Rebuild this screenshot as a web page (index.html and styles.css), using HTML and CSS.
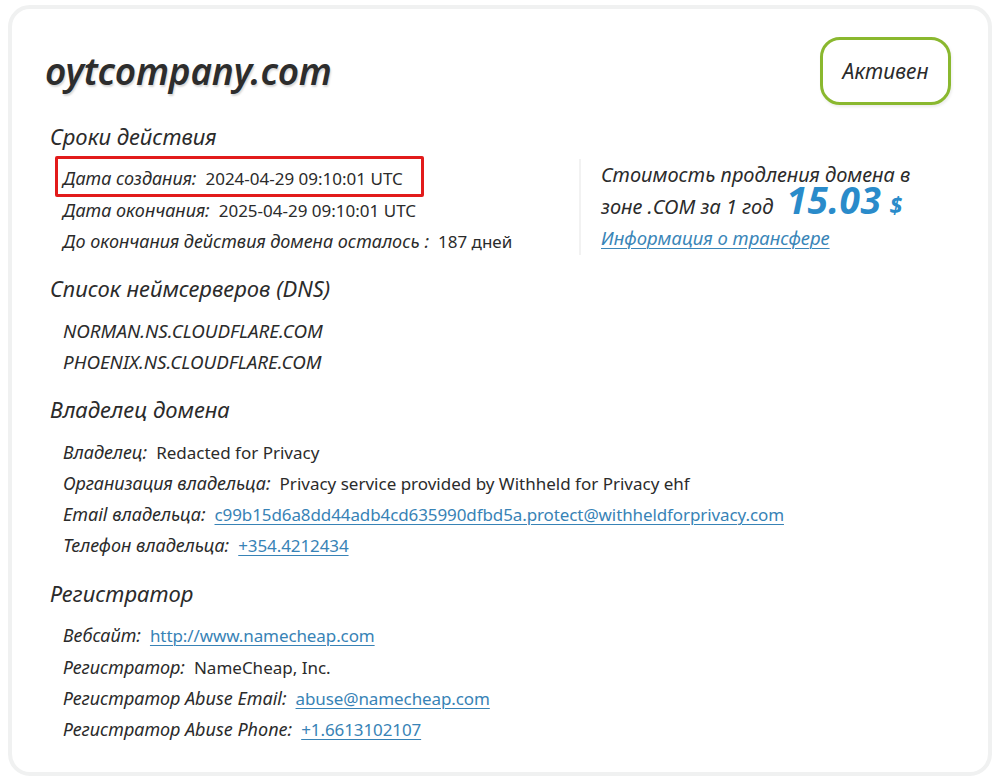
FILE: index.html
```html
<!DOCTYPE html>
<html lang="ru">
<head>
<meta charset="utf-8">
<title>oytcompany.com</title>
<link rel="stylesheet" href="styles.css">
</head>
<body>
<div class="card">
  <div class="top">
    <h1 class="domain">oytcompany.com</h1>
    <div class="badge">Активен</div>
  </div>

  <div class="split">
    <div class="left">
      <h2 class="sec">Сроки действия</h2>
      <div class="rows">
        <div class="row hl"><span class="lbl">Дата создания:</span><span class="val">2024-04-29 09:10:01 UTC</span></div>
        <div class="row"><span class="lbl">Дата окончания:</span><span class="val">2025-04-29 09:10:01 UTC</span></div>
        <div class="row"><span class="lbl">До окончания действия домена осталось :</span><span class="val">187 дней</span></div>
      </div>
    </div>
    <div class="right">
      <div class="price">
        <div class="pline">Стоимость продления домена в</div>
        <div class="pline pline2"><span>зоне .COM за 1 год</span><span class="num">15.03</span><span class="cur">$</span></div>
      </div>
      <a class="transfer" href="#">Информация о трансфере</a>
    </div>
  </div>

  <h2 class="sec">Список неймсерверов (DNS)</h2>
  <div class="rows">
    <div class="row"><span class="lbl ns">NORMAN.NS.CLOUDFLARE.COM</span></div>
    <div class="row"><span class="lbl ns">PHOENIX.NS.CLOUDFLARE.COM</span></div>
  </div>

  <h2 class="sec">Владелец домена</h2>
  <div class="rows">
    <div class="row"><span class="lbl">Владелец:</span><span class="val">Redacted for Privacy</span></div>
    <div class="row"><span class="lbl">Организация владельца:</span><span class="val">Privacy service provided by Withheld for Privacy ehf</span></div>
    <div class="row"><span class="lbl">Email владельца:</span><a class="val link" href="#">c99b15d6a8dd44adb4cd635990dfbd5a.protect@withheldforprivacy.com</a></div>
    <div class="row"><span class="lbl">Телефон владельца:</span><a class="val link" href="#">+354.4212434</a></div>
  </div>

  <h2 class="sec">Регистратор</h2>
  <div class="rows">
    <div class="row"><span class="lbl">Вебсайт:</span><a class="val link" href="#">http://www.namecheap.com</a></div>
    <div class="row"><span class="lbl">Регистратор:</span><span class="val">NameCheap, Inc.</span></div>
    <div class="row"><span class="lbl">Регистратор Abuse Email:</span><a class="val link" href="#">abuse@namecheap.com</a></div>
    <div class="row"><span class="lbl">Регистратор Abuse Phone:</span><a class="val link" href="#">+1.6613102107</a></div>
  </div>
</div>
</body>
</html>
```

FILE: styles.css
```css
html, body {
  margin: 0;
  padding: 0;
  background: #ffffff;
}
body {
  padding: 5px 9px 3px 8px;
  font-family: "Noto Sans", "Open Sans", sans-serif;
  color: #2b2b2b;
}
.card {
  box-sizing: border-box;
  height: 771px;
  border: 4px solid #f0f1f1;
  border-radius: 22px;
  background: #fff;
  padding: 22px 36px 0 34px;
}
.top {
  display: flex;
  justify-content: space-between;
  align-items: flex-start;
}
.domain {
  margin: 16px 0 0 -1px;
  font-size: 37px;
  font-style: italic;
  font-weight: 600;
  letter-spacing: -0.2px;
  line-height: 48px;
  color: #2d2d2d;
  text-shadow: 1px 2px 2px rgba(0,0,0,0.16);
}
.badge {
  margin-top: 6px;
  margin-right: 1px;
  width: 131px;
  height: 68px;
  box-sizing: border-box;
  border: 3px solid #8ab82f;
  border-radius: 20px;
  display: flex;
  align-items: center;
  justify-content: center;
  font-style: italic;
  font-size: 21px;
  color: #2b2b2b;
  box-shadow: 1px 2px 3px rgba(0,0,0,0.08);
}
.sec {
  margin: 0 0 0 4px;
  font-size: 22px;
  font-style: italic;
  font-weight: 400;
  line-height: 30px;
  color: #2b2b2b;
}
.split {
  display: flex;
  margin-top: 16px;
}
.left {
  width: 533px;
}
.right {
  margin-top: 38px;
  border-left: 2px solid #f2f2f2;
  padding: 0 0 6px 20px;
  align-self: flex-start;
  display: flex;
  flex-direction: column;
  align-items: flex-start;
}
.rows {
  display: flex;
  flex-direction: column;
  padding: 12.5px 0 16px 17px;
}
.row {
  display: flex;
  align-items: baseline;
  height: 31.3px;
  line-height: 31px;
  white-space: nowrap;
}
.split .row {
  height: 31px;
}
.split .rows {
  padding-bottom: 16.5px;
}
.row.hl {
  margin-left: -8px;
  padding: 4px 0 0 5px;
  width: 358px;
  height: 31px;
  border: 3px solid #e21b1b;
  border-radius: 2px;
  margin-top: -8px;
  margin-bottom: -2px;
}
.lbl {
  font-style: italic;
  color: #2b2b2b;
  font-size: 18px;
}
.lbl.ns {
  font-size: 18.8px;
}
.val {
  margin-left: 9px;
  font-size: 17px;
  color: #2b2b2b;
}
.link {
  color: #3883b6;
  text-decoration: underline;
  text-underline-offset: 3px;
  text-decoration-thickness: 1px;
  letter-spacing: -0.1px;
}
.price {
  font-size: 20px;
  font-style: italic;
  color: #2b2b2b;
}
.pline {
  height: 31px;
  line-height: 31px;
  white-space: nowrap;
}
.pline2 {
  display: flex;
  align-items: baseline;
}
.num {
  font-size: 37px;
  font-weight: 700;
  color: #2a8bca;
  letter-spacing: 0.6px;
  margin-left: 13px;
  line-height: 20px;
}
.cur {
  font-size: 23px;
  font-weight: 700;
  color: #2a8bca;
  margin-left: 8px;
  line-height: 20px;
}
.transfer {
  margin-top: 6px;
  font-size: 18.5px;
  font-style: italic;
  color: #3a86b8;
  text-decoration: underline;
  text-underline-offset: 3px;
  text-decoration-thickness: 1px;
  line-height: 22px;
}
```
